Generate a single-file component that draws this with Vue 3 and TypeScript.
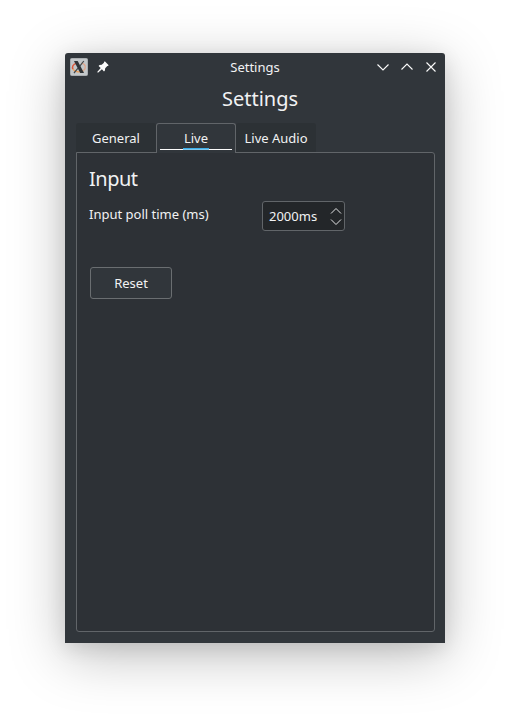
<script setup lang="ts">
import { ref } from 'vue'

const tabs = ['General', 'Live', 'Live Audio']
const active = ref('Live')
const pollTime = ref(2000)

function step(delta: number) {
  pollTime.value = Math.max(0, pollTime.value + delta)
}
</script>

<template>
  <div class="desktop">
    <main class="window">
      <header class="titlebar">
        <div class="side">
          <svg class="logo" width="18" height="18" viewBox="0 0 18 18">
            <rect x=".5" y=".5" width="17" height="17" rx="1" fill="#c3c7c9" stroke="#a9adb0" />
            <path d="M6.500 5.200C2.800 6.200 1.800 9 3 11.200" fill="none" stroke="#de5a3c" stroke-width="1.500" />
            <path d="M3 11.200C4.500 14 10 14.800 13.500 12.600" fill="none" stroke="#eda05c" stroke-width="1.400" />
            <path d="M11.500 5.200C15.800 6 16.500 10 13.500 12.600" fill="none" stroke="#dfa68c" stroke-width="1.300" />
            <path d="M4 3h3.700l6.300 12h-3.800z" fill="#303437" />
            <path d="M13.800 3 9.800 8.200M8 10.200 4 15" fill="none" stroke="#44494c" stroke-width="1.200" />
          </svg>
          <svg class="pin" width="12" height="12" viewBox="0 0 12 12">
            <path d="M7.800.3 11.700 4.200 10.800 5.100 10.300 5 8.200 7.300 7.900 9.500 7 10.400 4.900 8.300 1 11.800.2 11 3.700 7.100 1.600 5 2.500 4.100 4.700 3.800 7 1.700 6.900 1.200z" fill="#fcfcfc" />
          </svg>
        </div>
        <span class="caption">Settings</span>
        <div class="side controls">
          <svg width="12" height="12" viewBox="0 0 12 12"><path d="M.5 3.500 6 9l5.500-5.500" /></svg>
          <svg width="12" height="12" viewBox="0 0 12 12"><path d="M.5 8.500 6 3l5.500 5.500" /></svg>
          <svg width="12" height="12" viewBox="0 0 12 12"><path d="m1.500 1.500 9 9m0-9-9 9" /></svg>
        </div>
      </header>
      <h1>Settings</h1>
      <nav class="tabs">
        <button v-for="tab in tabs" :key="tab" class="tab" :class="{ active: tab === active }" @click="active = tab">
          {{ tab }}
        </button>
      </nav>
      <section class="panel">
        <h2>Input</h2>
        <div class="row">
          <span class="label">Input poll time (ms)</span>
          <div class="spin">
            <span>{{ pollTime }}ms</span>
            <div class="arrows">
              <svg width="12" height="8" viewBox="0 0 12 8" @click="step(100)"><path d="M1 6.500 6 1.500l5 5" /></svg>
              <svg width="12" height="8" viewBox="0 0 12 8" @click="step(-100)"><path d="M1 1.500 6 6.500l5-5" /></svg>
            </div>
          </div>
        </div>
        <button class="reset" @click="pollTime = 2000">Reset</button>
      </section>
    </main>
  </div>
</template>

<style>
body {
  background: #fff;
  overflow: hidden;
}
</style>

<style scoped>
.desktop {
  box-sizing: border-box;
  width: 510px;
  height: 720px;
  padding: 53px 65px 77px;
  background: #fff;
  overflow: hidden;
  font: 13px/18px "Noto Sans", sans-serif;
  color: #f1f2f3;
}
.window {
  box-sizing: border-box;
  height: 590px;
  padding: 0 10px 11px 11px;
  display: flex;
  flex-direction: column;
  background: #31363b;
  border-radius: 3px 3px 0 0;
  box-shadow: 0 12px 56px rgba(0, 0, 0, .26), 0 5px 20px rgba(0, 0, 0, .1);
}
.titlebar {
  height: 28px;
  margin: 0 -5px 0 -6px;
  display: flex;
  align-items: center;
}
.side {
  width: 90px;
  display: flex;
  align-items: center;
}
.pin {
  margin-left: 9px;
}
.caption {
  flex: 1;
  text-align: center;
}
.controls {
  box-sizing: border-box;
  justify-content: flex-end;
  gap: 12px;
  padding-right: 3px;
}
.controls path,
.arrows path {
  fill: none;
  stroke: #fcfcfc;
  stroke-width: 1.1;
}
.arrows path {
  stroke: #e4e5e6;
  stroke-width: 1;
}
h1,
h2 {
  margin: 0;
  font-size: 20px;
  font-weight: 400;
  line-height: 28px;
}
h1 {
  height: 42px;
  padding-left: 9px;
  line-height: 36px;
  text-align: center;
}
h2 {
  letter-spacing: -.5px;
}
.tabs {
  position: relative;
  display: flex;
  height: 30px;
  margin-bottom: -1px;
}
.tab {
  position: relative;
  box-sizing: border-box;
  width: 80px;
  height: 29px;
  padding: 0;
  border: 0;
  background: #2c3135;
  color: inherit;
  font: inherit;
  border-radius: 3px 3px 0 0;
}
.tab.active {
  height: 30px;
  padding-bottom: 1px;
  border: 1px solid #616569;
  border-bottom: 0;
  background: #31363b;
}
.tab.active::before,
.tab.active::after {
  content: "";
  position: absolute;
  left: 3px;
  right: 3px;
  bottom: 3px;
  height: 1px;
  background: #fcfcfc;
}
.tab.active::after {
  left: 26px;
  right: 26px;
  bottom: 4px;
  background: #3daee9;
  box-shadow: 0 1px #7cc8ef;
}
.panel {
  flex: 1;
  box-sizing: border-box;
  padding: 12px;
  border: 1px solid #616569;
  border-radius: 0 3px 3px 3px;
  background: #2d3136;
}
.row {
  display: flex;
  margin-top: 8px;
}
.label {
  width: 173px;
  line-height: 27px;
}
.spin {
  box-sizing: border-box;
  width: 83px;
  height: 30px;
  padding: 0 2px 0 6px;
  display: flex;
  align-items: center;
  justify-content: space-between;
  border: 1px solid #616569;
  border-radius: 3px;
  background: #232629;
}
.arrows {
  display: flex;
  flex-direction: column;
  gap: 3px;
}
.reset {
  display: block;
  width: 82px;
  height: 32px;
  margin: 36px 0 0 1px;
  padding: 0;
  border: 1px solid #6a6e71;
  border-radius: 3px;
  background: #31363b;
  color: inherit;
  font: inherit;
}
</style>
